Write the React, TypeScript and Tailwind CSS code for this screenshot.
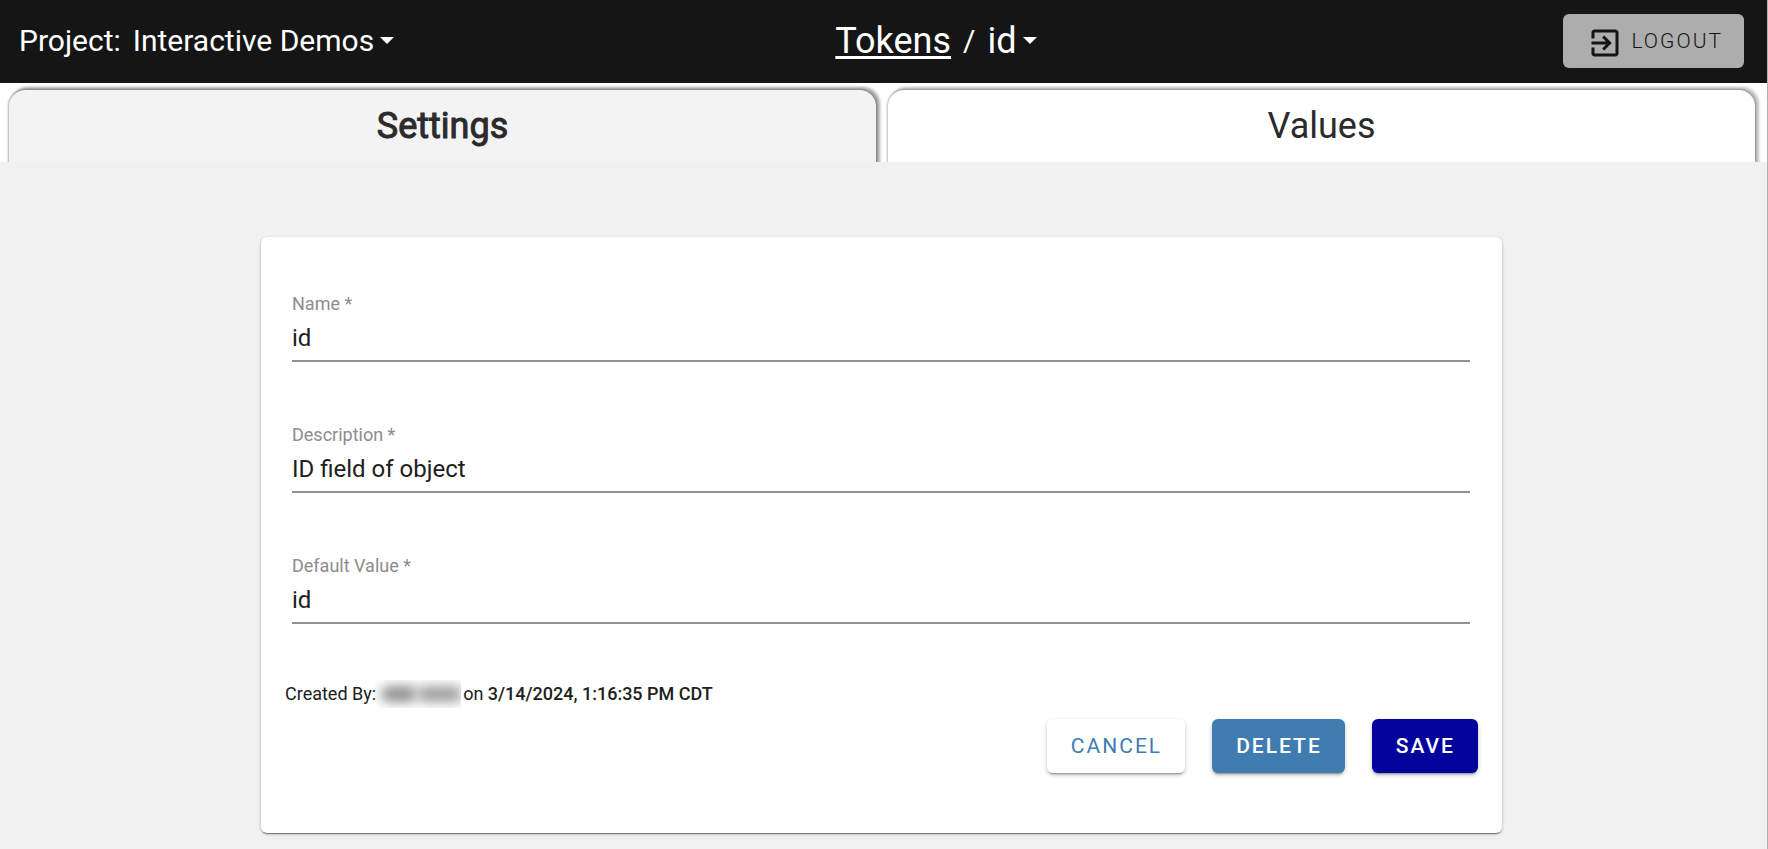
import { useState } from "react";

const fields = [
  { id: "name", label: "Name *", value: "id" },
  { id: "description", label: "Description *", value: "ID field of object" },
  { id: "defaultValue", label: "Default Value *", value: "id" },
];

const Caret = () => (
  <svg className="h-[7px] w-[14px]" viewBox="0 0 14 7" fill="currentColor">
    <path d="M0 0h14L7 7z" />
  </svg>
);

const LogoutIcon = () => (
  <svg className="mt-0.5 h-9 w-9" viewBox="0 0 24 24" fill="currentColor">
    <path d="M10.09 15.59L11.5 17l5-5-5-5-1.41 1.41L12.67 11H3v2h9.67l-2.58 2.59zM19 3H5c-1.11 0-2 .9-2 2v4h2V5h14v14H5v-4H3v4c0 1.1.89 2 2 2h14c1.1 0 2-.9 2-2V5c0-1.1-.9-2-2-2z" />
  </svg>
);

const Header = () => (
  <header className="grid h-[83px] grid-cols-[15fr_auto_13fr] items-center bg-[#151515] pr-[23px] pb-[2px] pl-[19px] text-white">
    <div className="flex items-center gap-3 text-[30px]">
      <span>Project:</span>
      <button className="flex items-center gap-1.5">
        Interactive Demos
        <Caret />
      </button>
    </div>
    <nav className="flex items-center gap-3 text-4xl">
      <a href="#tokens" className="underline decoration-[3px] underline-offset-[3px]">
        Tokens
      </a>
      <span className="text-3xl">/</span>
      <button className="flex items-center gap-1.5">
        id
        <Caret />
      </button>
    </nav>
    <button className="flex h-[54px] items-center gap-2 justify-self-end rounded-md bg-[#adadad] pt-0.5 pr-[21px] pl-6 text-[21px] font-light tracking-[2px] text-[#151515]">
      <LogoutIcon />
      LOGOUT
    </button>
  </header>
);

const Tabs = ({ active, onChange }: { active: string; onChange: (tab: string) => void }) => (
  <div role="tablist" className="flex h-[79px] gap-3 overflow-hidden bg-white pt-[7px] pr-3 pl-[9px]">
    {["Settings", "Values"].map((tab) => (
      <button
        key={tab}
        role="tab"
        aria-selected={active === tab}
        onClick={() => onChange(tab)}
        className={`h-[80px] flex-1 rounded-t-2xl pb-2 text-4xl text-[#2b2b2b] ${
          active === tab
            ? "bg-[#f3f3f3] [-webkit-text-stroke:1px_#2b2b2b] shadow-[0_0_3px_rgba(0,0,0,0.6),3px_-2px_3px_1px_rgba(0,0,0,0.32)]"
            : "bg-white shadow-[0_0_3px_rgba(0,0,0,0.5),3px_-2px_3px_1px_rgba(0,0,0,0.24)]"
        }`}
      >
        {tab}
      </button>
    ))}
  </div>
);

const Field = ({ id, label, value }: { id: string; label: string; value: string }) => (
  <div className="flex h-[84px] flex-col justify-end border-b-2 border-[#919191]">
    <label htmlFor={id} className="text-lg leading-6 text-[#8c8c8c]">
      {label}
    </label>
    <input
      id={id}
      defaultValue={value}
      className="h-11 w-full bg-transparent text-2xl text-[#202020] outline-none"
    />
  </div>
);

const buttonBase =
  "h-[54px] rounded-md pt-0.5 pr-[23px] pl-6 text-[21px] tracking-[2px] shadow-[0_3px_2px_-2px_rgba(0,0,0,0.3),0_2px_4px_rgba(0,0,0,0.24)]";

const App = () => {
  const [tab, setTab] = useState("Settings");

  return (
    <div className="min-h-screen border-r border-[#b0b0b0] bg-[#f1f1f1] font-[Roboto,sans-serif] text-[#202020]">
      <Header />
      <Tabs active={tab} onChange={setTab} />
      <main className="pt-[75px] pr-[265px] pl-[261px]">
        <form
          onSubmit={(e) => e.preventDefault()}
          className="rounded-md bg-white px-6 pt-[41px] pb-[60px] shadow-[0_2px_1px_-1px_rgba(0,0,0,0.4),0_1px_3px_rgba(0,0,0,0.3)]"
        >
          <div className="flex flex-col gap-[47px] pr-2 pl-[7px]">
            {fields.map((field) => (
              <Field key={field.id} {...field} />
            ))}
          </div>
          <p className="mt-14 flex text-lg leading-7">
            <span>Created By:</span>
            <span className="mr-[2px] -ml-[2px] flex w-[87px] items-center justify-end overflow-hidden">
              <span className="h-4 w-9 rounded-full bg-[#8d908d] blur-[6px]" />
              <span className="h-4 w-11 rounded-l-full bg-[#9d9f9d] blur-[6px]" />
            </span>
            <span>
              on <span className="font-medium">3/14/2024, 1:16:35 PM CDT</span>
            </span>
          </p>
          <div className="mt-[11px] flex justify-end gap-[27px]">
            <button type="button" className={`${buttonBase} bg-white text-[#407cb0]`}>
              CANCEL
            </button>
            <button type="button" className={`${buttonBase} bg-[#407cb0] font-medium text-white`}>
              DELETE
            </button>
            <button type="submit" className={`${buttonBase} bg-[#04049c] font-medium text-white`}>
              SAVE
            </button>
          </div>
        </form>
      </main>
    </div>
  );
};

export default App;
